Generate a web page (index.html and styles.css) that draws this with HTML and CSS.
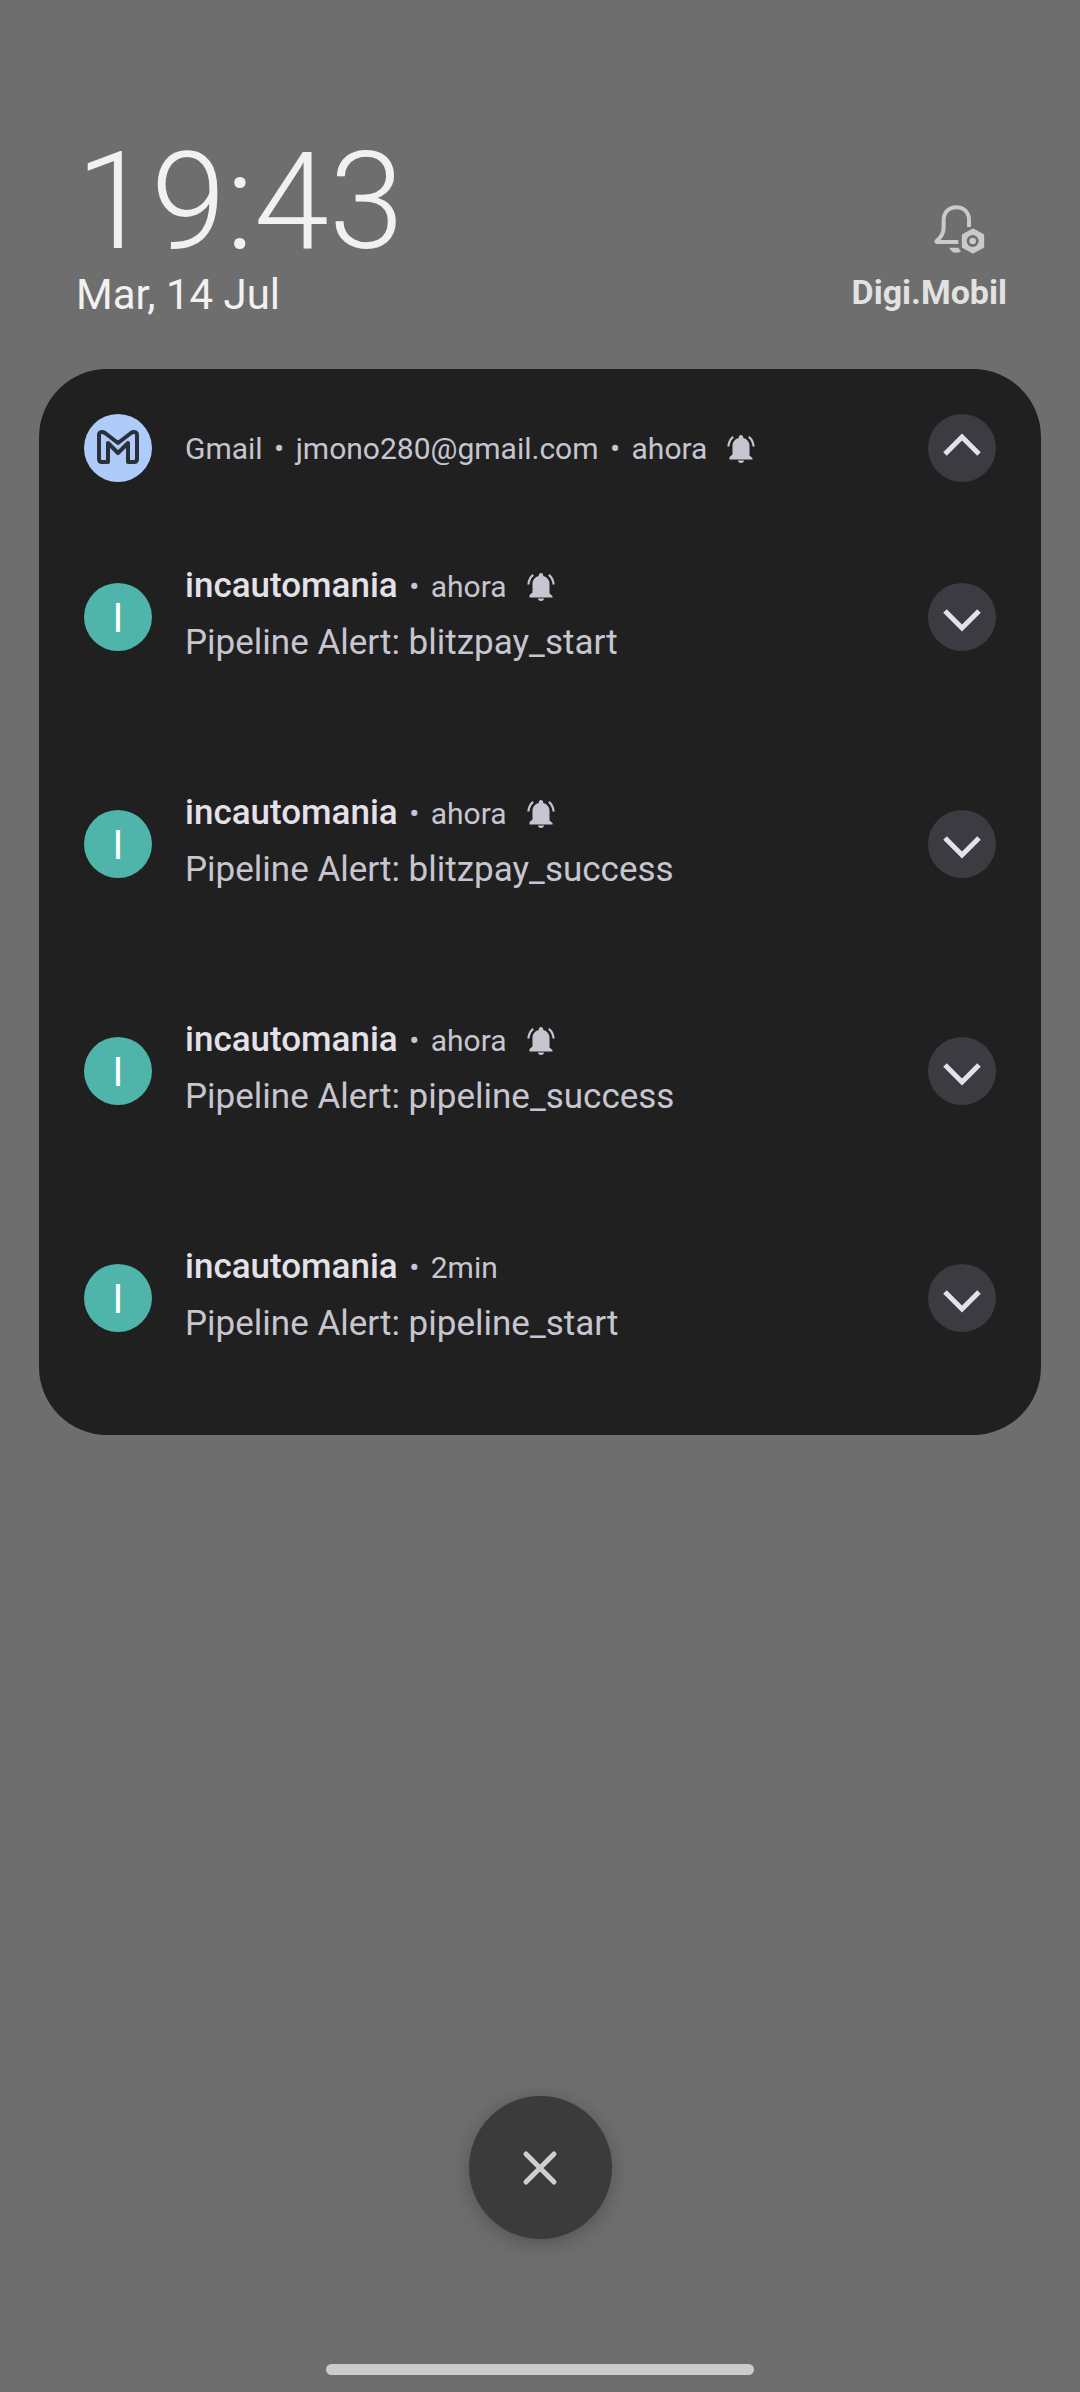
FILE: index.html
```
<!DOCTYPE html>
<html lang="es">
<head>
    <meta charset="UTF-8">
    <meta name="viewport" content="width=device-width, initial-scale=1.0">
    <title>Notificaciones</title>
    <link rel="stylesheet" href="styles.css">
</head>
<body>
    <!-- Iconos reutilizables -->
    <svg class="sprite" aria-hidden="true">
        <symbol id="bell" viewBox="0 0 28 28">
            <path d="M14 0c1.300 0 2.200 1 2.200 2.200v.8c4 1 6.300 4 6.300 8v9.500l3 2.500v1.500h-23V22l3-2.500V11c0-4 2.300-7 6.300-8v-.8C11.800 1 12.700 0 14 0zM11 25.500h6c0 1.500-1.300 2.500-3 2.500s-3-1-3-2.500z" fill="currentColor"/>
            <path d="M6.200 1.800C3.500 3.800 1.700 7 1.400 11.500M21.800 1.800c2.700 2 4.500 5.200 4.800 9.700" fill="none" stroke="currentColor" stroke-width="2.200"/>
        </symbol>
        <symbol id="chevron" viewBox="0 0 68 68">
            <path d="M17 28l17 17 17-17" fill="none" stroke="currentColor" stroke-width="5"/>
        </symbol>
    </svg>

    <header class="status">
        <div class="clock">
            <time class="hour">19:43</time>
            <time class="date">Mar, 14 Jul</time>
        </div>
        <div class="carrier">
            <svg class="dnd-icon" viewBox="340 70 156 156" aria-hidden="true">
                <path d="M448 142v-21c0-24-16-38-38-38s-38 14-38 38v22c0 18-6 29-21 41q-3 3 2 3h63" fill="none" stroke="#cacaca" stroke-width="12"/>
                <path d="M389 204h27l8 12q-7 3-15 3-14 0-20-15z" fill="#cacaca"/>
                <path d="M460 151l29 16v34l-29 16-29-16v-34z" fill="#cacaca" stroke="#cacaca" stroke-width="9" stroke-linejoin="round"/>
                <circle cx="459" cy="184" r="14" fill="#cacaca" stroke="#6e6e6e" stroke-width="8"/>
            </svg>
            <span class="operator">Digi.Mobil</span>
        </div>
    </header>

    <main class="card">
        <!-- Cabecera del grupo -->
        <div class="row group">
            <svg class="avatar gmail" viewBox="0 0 68 68" aria-hidden="true">
                <path d="M15 21c0-3 3-4 6-2l13 10 13-10c3-2 6-1 6 2v24c0 2-1 3-3 3h-6V29L34 39 24 29v19h-6c-2 0-3-1-3-3z" fill="none" stroke="#28303c" stroke-width="4" stroke-linejoin="round"/>
            </svg>
            <div class="meta">
                <span>Gmail</span><span class="dot">•</span><span>jmono280@gmail.com</span><span class="dot">•</span><span>ahora</span>
                <svg class="bell"><use href="#bell"/></svg>
            </div>
            <button class="toggle up" aria-label="Contraer"><svg><use href="#chevron"/></svg></button>
        </div>

        <article class="row">
            <span class="avatar">I</span>
            <div class="content">
                <div class="meta">
                    <h2>incautomania</h2><span class="dot">•</span><span>ahora</span>
                    <svg class="bell"><use href="#bell"/></svg>
                </div>
                <p>Pipeline Alert: blitzpay_start</p>
            </div>
            <button class="toggle" aria-label="Expandir"><svg><use href="#chevron"/></svg></button>
        </article>

        <article class="row">
            <span class="avatar">I</span>
            <div class="content">
                <div class="meta">
                    <h2>incautomania</h2><span class="dot">•</span><span>ahora</span>
                    <svg class="bell"><use href="#bell"/></svg>
                </div>
                <p>Pipeline Alert: blitzpay_success</p>
            </div>
            <button class="toggle" aria-label="Expandir"><svg><use href="#chevron"/></svg></button>
        </article>

        <article class="row">
            <span class="avatar">I</span>
            <div class="content">
                <div class="meta">
                    <h2>incautomania</h2><span class="dot">•</span><span>ahora</span>
                    <svg class="bell"><use href="#bell"/></svg>
                </div>
                <p>Pipeline Alert: pipeline_success</p>
            </div>
            <button class="toggle" aria-label="Expandir"><svg><use href="#chevron"/></svg></button>
        </article>

        <article class="row">
            <span class="avatar">I</span>
            <div class="content">
                <div class="meta">
                    <h2>incautomania</h2><span class="dot">•</span><span>2min</span>
                </div>
                <p>Pipeline Alert: pipeline_start</p>
            </div>
            <button class="toggle" aria-label="Expandir"><svg><use href="#chevron"/></svg></button>
        </article>
    </main>

    <footer class="bottom">
        <button class="clear" aria-label="Borrar todo">
            <svg viewBox="0 0 36 36"><path d="M4 4l28 28M32 4L4 32" fill="none" stroke="currentColor" stroke-width="5" stroke-linecap="round"/></svg>
        </button>
        <div class="home-bar"></div>
    </footer>
</body>
</html>
```
FILE: styles.css
```
* {
    box-sizing: border-box;
}

body {
    display: flex;
    flex-direction: column;
    min-height: 100vh;
    margin: 0;
    padding: 134px 39px 17px;
    font-family: Roboto, sans-serif;
    background-color: #6e6e6e;
    color: #c6c5d0;
}

h2, p {
    margin: 0;
}

button {
    display: flex;
    align-items: center;
    justify-content: center;
    padding: 0;
    border: none;
    border-radius: 50%;
    cursor: pointer;
}

.sprite {
    position: absolute;
    width: 0;
    height: 0;
}

/* Hora, fecha y operador */
.status {
    display: flex;
    justify-content: space-between;
    align-items: flex-end;
    padding: 0 34px 0 37px;
    margin-bottom: 50px;
}

.clock {
    display: flex;
    flex-direction: column;
    color: #f1f1f1;
}

.hour {
    font-size: 135px;
    line-height: 137px;
    font-weight: 300;
}

.date {
    font-size: 42px;
    line-height: 48px;
}

.carrier {
    display: flex;
    flex-direction: column;
    align-items: flex-end;
    gap: 10px;
}

.dnd-icon {
    width: 52px;
    height: 52px;
    margin-right: 22px;
}

.operator {
    font-size: 34px;
    line-height: 54px;
    font-weight: 700;
    color: #e2e2e2;
}

/* Tarjeta de notificaciones */
.card {
    padding: 45px 45px 0;
    border-radius: 68px;
    background-color: #202020;
}

.row {
    display: flex;
    align-items: center;
    gap: 33px;
    padding: 39px 0 87px;
}

.row.group {
    padding: 0 0 45px;
}

.avatar {
    flex: none;
    width: 68px;
    height: 68px;
    border-radius: 50%;
    background-color: #4fb5aa;
    color: white;
    font-size: 40px;
    line-height: 72px;
    text-align: center;
}

.gmail {
    background-color: #aecbfa;
}

.content {
    flex: 1;
}

.meta {
    display: flex;
    align-items: baseline;
    font-size: 30px;
    line-height: 40px;
}

.group .meta {
    flex: 1;
    padding-top: 2px;
}

.dot {
    width: 33px;
    text-align: center;
}

.bell {
    align-self: center;
    width: 28px;
    height: 28px;
    margin-left: 20px;
}

h2 {
    font-size: 35px;
    line-height: 40px;
    font-weight: 500;
    color: #e4e1e9;
}

p {
    margin-top: 12px;
    font-size: 35px;
    line-height: 48px;
}

.toggle {
    flex: none;
    width: 68px;
    height: 68px;
    background-color: #3c3b41;
    color: #e4e1e9;
}

.toggle svg {
    width: 68px;
    height: 68px;
}

.up svg {
    transform: rotate(180deg);
}

/* Botón de borrar y barra de inicio */
.bottom {
    display: flex;
    flex-direction: column;
    align-items: center;
    gap: 125px;
    margin-top: auto;
}

.clear {
    width: 143px;
    height: 143px;
    background-color: #3b3b3b;
    color: #cfcfcf;
    box-shadow: 0 4px 20px rgba(0, 0, 0, 0.25);
}

.clear svg {
    width: 36px;
    height: 36px;
}

.home-bar {
    width: 428px;
    height: 11px;
    border-radius: 6px;
    background-color: #cccccc;
}
```
